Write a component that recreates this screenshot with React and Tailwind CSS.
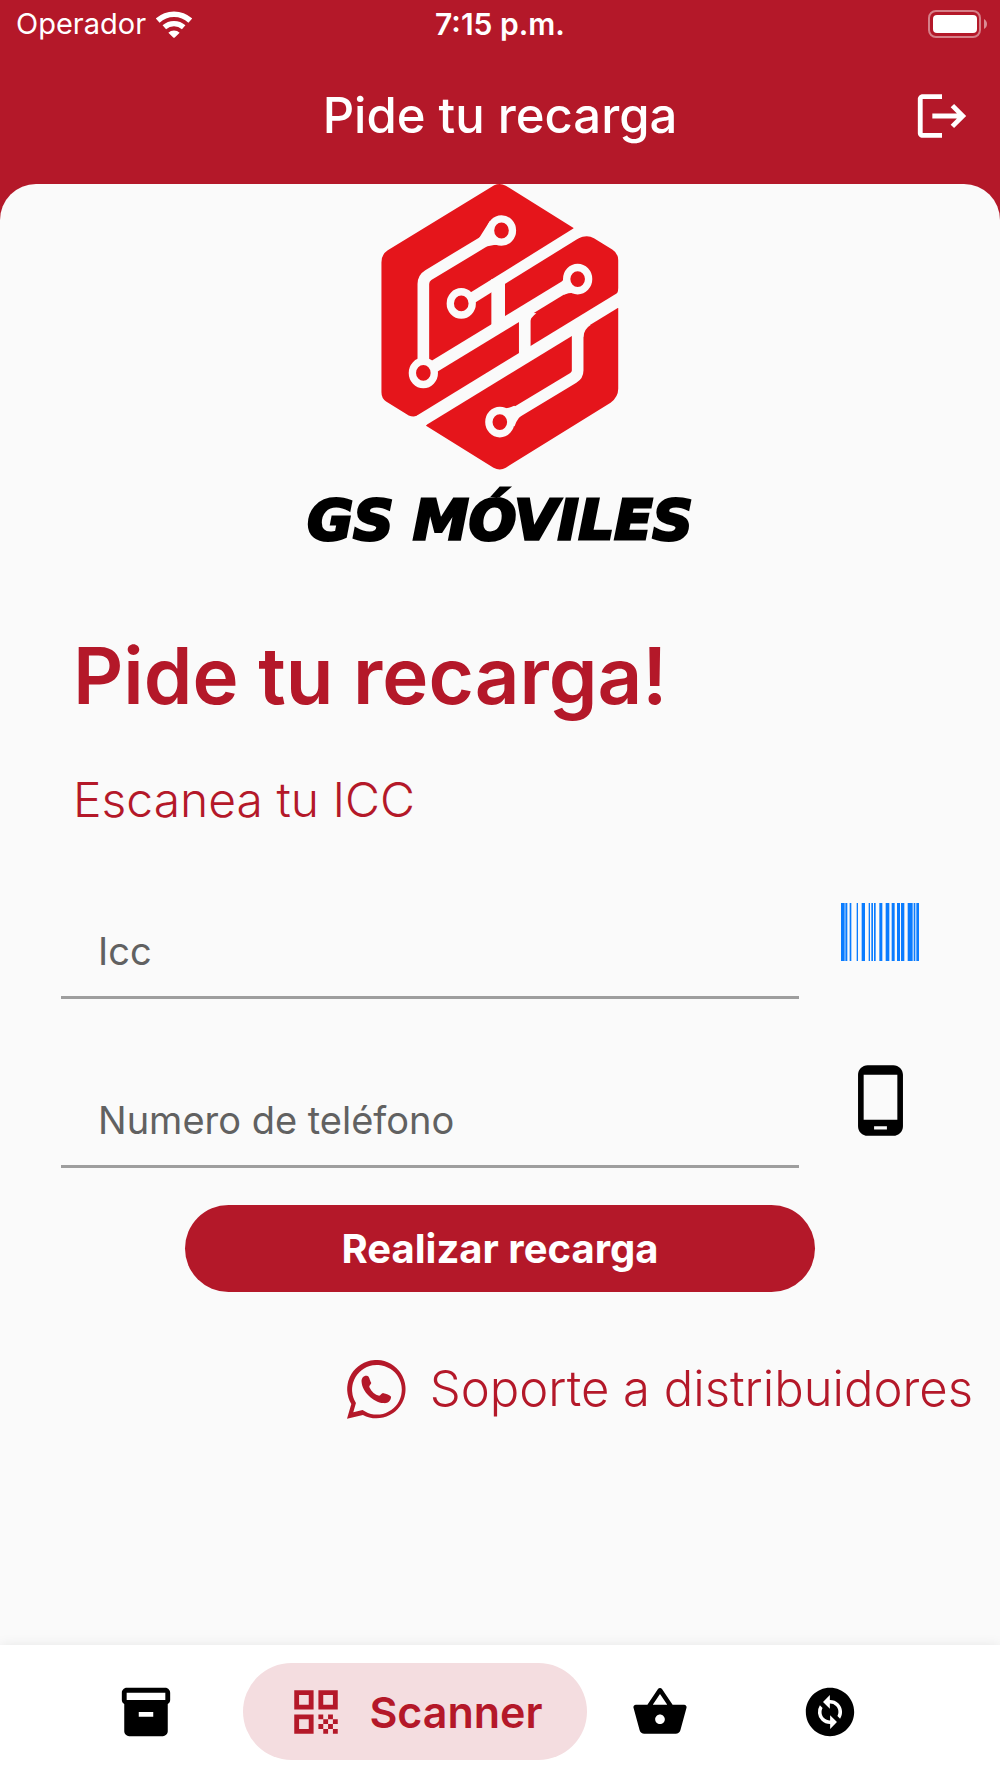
import { useState } from "react"
import {
  MdChangeCircle,
  MdInventory2,
  MdLogout,
  MdPhoneAndroid,
  MdQrCode,
  MdShoppingBasket,
} from "react-icons/md"

// x position and width of every bar
const bars = [
  [0, 11],
  [13, 6],
  [26, 5],
  [47, 4],
  [62, 10],
  [83, 4],
  [91, 5],
  [99, 5],
  [115, 9],
  [134, 11],
  [152, 9],
  [168, 9],
  [180, 10],
  [200, 15],
  [218, 5],
  [226, 8],
]

function BarcodeIcon() {
  return (
    <svg viewBox="0 0 234 174" className="w-[78px] h-[58px]" fill="#0a7cff">
      {bars.map(([x, width]) => (
        <rect key={x} x={x} y="0" width={width} height="174" />
      ))}
    </svg>
  )
}

function WhatsappIcon() {
  return (
    <svg viewBox="24 32 178 176" className="w-[59px] h-[59px]" fill="currentColor">
      <path
        fillRule="evenodd"
        d="M24 208L37 164A88 88 0 1 1 72 197ZM43 189L71 182A75 75 0 1 0 51 161Z"
      />
      <path d="M68 97C67 86 74 77 86 79C91 80 92 90 97 100C98 104 89 109 92 114C98 127 109 136 121 139C126 138 129 129 134 131C142 133 153 136 157 142C156 156 146 163 134 161C102 158 70 126 68 97Z" />
    </svg>
  )
}

function StatusBar() {
  return (
    <div className="grid grid-cols-3 items-center h-12 px-4 text-[29px] leading-8">
      <div className="flex items-center gap-[10px]">
        <span>Operador</span>
        <svg viewBox="18 30 108 81" className="w-9 h-[27px]" fill="none" stroke="#fff">
          <path d="M23 59A72 72 0 0 1 121 59" strokeWidth="17" />
          <path d="M43 79A44 44 0 0 1 101 79" strokeWidth="16" />
          <path d="M55 95A25 25 0 0 1 89 95L75 109Q72 112 69 109Z" fill="#fff" stroke="none" />
        </svg>
      </div>
      <span className="text-center text-[30px] font-semibold">7:15 p.m.</span>
      <svg viewBox="0 0 60 28" className="w-[60px] h-7 justify-self-end -mr-1" fill="none">
        <rect x="1" y="1" width="51" height="26" rx="7" stroke="#fff" strokeOpacity=".45" strokeWidth="2" />
        <rect x="5" y="5" width="44" height="18" rx="4" fill="#fff" />
        <path d="M56 9c4 2 4 8 0 10z" fill="#fff" fillOpacity=".5" />
      </svg>
    </div>
  )
}

function Header() {
  return (
    <header className="grid grid-cols-[1fr_auto_1fr] items-center h-[136px] px-[29px]">
      <h1 className="col-start-2 text-[49px] leading-[56px] font-medium">
        Pide tu recarga
      </h1>
      <button type="button" aria-label="Salir" className="justify-self-end">
        <MdLogout size={58} />
      </button>
    </header>
  )
}

function Logo() {
  return (
    <div className="flex flex-col items-center">
      <svg viewBox="66 39 713 860" className="w-[238px] h-[286px]">
        <path
          fill="#e5151b"
          d="M405 43Q422 35 440 44L645 172L600 219L658 202Q685 190 705 202L760 236Q778 247 778 268V352Q778 370 766 378L740 411L778 412V655Q778 680 755 697L440 892Q422 903 403 892L200 766L220 730L182 732Q165 743 148 735L80 693Q66 683 66 665V275Q66 250 85 238Z"
        />
        <g fill="none" stroke="#fafafa" strokeWidth="35">
          <path d="M427 180L207 313Q192 322 192 340V607" />
          <path d="M306 402L700 157" strokeWidth="33" />
          <path d="M417 325V468" strokeWidth="41" />
          <path d="M192 607L656 325" strokeWidth="37" />
          <path d="M497 430V550" />
          <path d="M150 772L830 356" strokeWidth="39" />
          <path d="M656 470V600Q656 614 643 622L422 755" />
        </g>
        <g fill="#fafafa">
          <path d="M345 225L392 150L440 222Q410 220 385 226Z" />
          <path d="M590 350Q615 335 620 305L665 368Q635 362 615 372Z" />
          <path d="M500 724Q475 740 466 768L420 714Q445 716 465 706Z" />
          <path d="M510 460Q514 440 532 428L500 425Z" />
          <path d="M673 500Q675 475 695 463L655 465Z" />
        </g>
        <g fill="#e5151b" stroke="#fafafa" strokeWidth="22">
          <ellipse cx="427" cy="179" rx="33" ry="35" />
          <ellipse cx="306" cy="398" rx="33" ry="35" />
          <ellipse cx="656" cy="325" rx="33" ry="35" />
          <ellipse cx="192" cy="607" rx="33" ry="35" />
          <ellipse cx="422" cy="755" rx="33" ry="35" />
        </g>
      </svg>
      <p className="mt-5 font-['DejaVu_Sans',sans-serif] text-[56px] leading-[60px] font-bold italic text-black [-webkit-text-stroke:3px_#000]">
        GS MÓVILES
      </p>
    </div>
  )
}

function Field({ id, label, type, icon, value, onChange }) {
  return (
    <div className="grid grid-cols-[1fr_78px] items-center gap-[42px] h-[169px]">
      <div className="self-end border-b-3 border-[#9e9e9e] px-[37px] pb-[17px]">
        <input
          id={id}
          type={type}
          aria-label={label}
          placeholder={label}
          value={value}
          onChange={(e) => onChange(e.target.value)}
          className="block w-full h-14 text-[38px] leading-[56px] outline-none text-[#616161] placeholder:text-[#616161]"
        />
      </div>
      <div className="flex justify-center pt-[34px]">{icon}</div>
    </div>
  )
}

function BottomNav() {
  return (
    <nav className="flex justify-center items-center h-[133px] pr-6 bg-white shadow-[0_0_12px_rgba(0,0,0,0.08)]">
      <a href="#inventario" aria-label="Inventario" className="px-11 mr-6 text-black">
        <MdInventory2 size={58} />
      </a>
      <a
        href="#scanner"
        className="flex items-center gap-6 h-[97px] px-11 rounded-full bg-[#f4dde0] text-[#b41829] text-[43px] leading-[56px] font-semibold"
      >
        <MdQrCode size={58} />
        Scanner
      </a>
      <a href="#compras" aria-label="Compras" className="px-11 mr-6 text-black">
        <MdShoppingBasket size={58} />
      </a>
      <a href="#cambios" aria-label="Cambios" className="px-11 text-black">
        <MdChangeCircle size={58} />
      </a>
    </nav>
  )
}

function App() {
  const [icc, setIcc] = useState("")
  const [phone, setPhone] = useState("")

  return (
    <div className="flex flex-col min-h-screen bg-[#b41829] font-[Inter,sans-serif] text-white">
      <StatusBar />
      <Header />

      <main className="grow rounded-t-[36px] bg-[#fafafa] text-[#b41829]">
        <Logo />

        <section className="px-[73px] pt-[80px]">
          <h2 className="text-[78px] leading-[92px] font-semibold">
            Pide tu recarga!
          </h2>
          <p className="mt-[50px] text-[48px] leading-[56px] font-light">
            Escanea tu ICC
          </p>
        </section>

        <form onSubmit={(e) => e.preventDefault()}>
          <div className="pl-[61px] pr-[81px] pt-[2px]">
            <Field
              id="icc"
              label="Icc"
              type="text"
              value={icc}
              onChange={setIcc}
              icon={
                <button type="button" aria-label="Escanear">
                  <BarcodeIcon />
                </button>
              }
            />
            <Field
              id="phone"
              label="Numero de teléfono"
              type="tel"
              value={phone}
              onChange={setPhone}
              icon={<MdPhoneAndroid size={77} className="text-black" />}
            />
          </div>
          <button
            type="submit"
            className="block w-[63%] h-[87px] mx-auto mt-[37px] rounded-full bg-[#b41829] text-white text-[40px] leading-[48px] font-bold"
          >
            Realizar recarga
          </button>
        </form>

        <a
          href="#soporte"
          className="flex justify-end items-center gap-6 mt-[61px] pr-[27px] text-[49px] leading-[72px] font-light"
        >
          <WhatsappIcon />
          Soporte a distribuidores
        </a>
      </main>

      <BottomNav />
    </div>
  )
}

export default App
